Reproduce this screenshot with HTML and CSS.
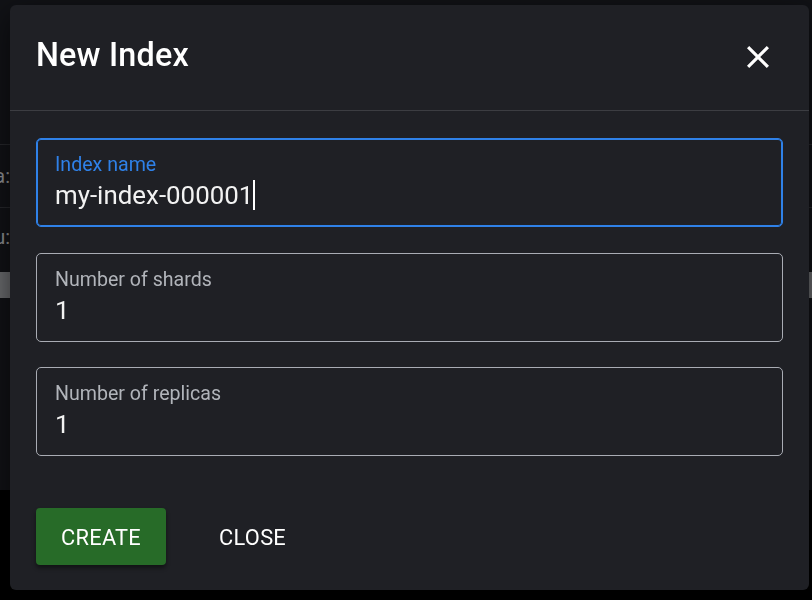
FILE: index.html
```html
<!DOCTYPE html>
<html lang="en">
<head>
<meta charset="utf-8">
<title>New Index</title>
<link rel="stylesheet" href="styles.css">
</head>
<body>
<div class="page">
  <div class="bg-row bg-row-first"><span class="bg-cell"></span></div>
  <div class="bg-row"><span class="bg-cell">Replica:</span></div>
  <div class="bg-row bg-row-plain"><span class="bg-cell">Menu:</span></div>
  <div class="bg-bar"></div>
</div>

<div class="dialog" role="dialog" aria-labelledby="dlg-title">
  <div class="dialog-header">
    <h2 class="dialog-title" id="dlg-title">New Index</h2>
    <button class="icon-btn" aria-label="close">
      <svg viewBox="5 5 14 14" width="22" height="22" aria-hidden="true">
        <path fill="#ffffff" d="M19 6.41L17.590 5 12 10.59 6.41 5 5 6.41 10.59 12 5 17.59 6.41 19 12 13.41 17.59 19 19 17.59 13.41 12z"/>
      </svg>
    </button>
  </div>
  <div class="dialog-content">
    <div class="field field-focused">
      <label class="field-label">Index name</label>
      <div class="field-value">my-index-000001<span class="caret"></span></div>
    </div>
    <div class="field">
      <label class="field-label">Number of shards</label>
      <div class="field-value">1</div>
    </div>
    <div class="field">
      <label class="field-label">Number of replicas</label>
      <div class="field-value">1</div>
    </div>
  </div>
  <div class="dialog-actions">
    <button class="btn btn-contained">CREATE</button>
    <button class="btn btn-text">CLOSE</button>
  </div>
</div>
</body>
</html>
```

FILE: styles.css
```css
html, body {
  margin: 0;
  padding: 0;
}
body {
  width: 812px;
  height: 600px;
  overflow: hidden;
  background: #000000;
  font-family: Roboto, "Noto Sans", "Liberation Sans", sans-serif;
}

/* page behind the modal (dimmed) */
.page {
  height: 490px;
  background: #111216;
  display: flex;
  flex-direction: column;
}
.bg-row {
  height: 62px;
  border-bottom: 1px solid #26272b;
  display: flex;
  align-items: center;
}
.bg-row-first {
  height: 144px;
}
.bg-row-plain {
  border-bottom: none;
  height: 58px;
}
.bg-cell {
  width: 10px;
  overflow: hidden;
  display: flex;
  justify-content: flex-end;
  white-space: nowrap;
  color: #8d8e92;
  font-size: 20px;
}
.bg-bar {
  width: 100%;
  height: 26px;
  margin-top: 6px;
  background: #6a6b6e;
}

/* dialog */
.dialog {
  position: fixed;
  left: 10px;
  top: 5px;
  width: 799px;
  height: 585px;
  background: #1f2025;
  border-radius: 6px;
  box-shadow: 0 10px 30px rgba(0, 0, 0, 0.6);
  display: flex;
  flex-direction: column;
  box-sizing: border-box;
}
.dialog-header {
  height: 106px;
  box-sizing: border-box;
  border-bottom: 1px solid #3c3d42;
  display: flex;
  align-items: flex-start;
  justify-content: space-between;
  padding: 30px 33px 0 26px;
}
.dialog-title {
  margin: 0;
  font-size: 32.3px;
  line-height: 40px;
  font-weight: 500;
  color: #ffffff;
  letter-spacing: 0.2px;
}
.icon-btn {
  width: 37px;
  height: 37px;
  margin-top: 3px;
  padding: 0;
  border: none;
  background: transparent;
  display: flex;
  align-items: center;
  justify-content: center;
  cursor: pointer;
}

.dialog-content {
  padding: 27px 26px 0 26px;
  display: flex;
  flex-direction: column;
  gap: 25.5px;
}
.field {
  height: 89px;
  box-sizing: border-box;
  border: 1px solid #a9acb4;
  border-radius: 5px;
  padding: 14.3px 18px 0 18px;
}
.field-focused {
  border-color: #2f81e8;
  box-shadow: inset 0 0 0 1px #2f81e8;
}
.field-label {
  display: block;
  font-size: 19.6px;
  line-height: 24px;
  color: #b1b4ba;
}
.field-focused .field-label {
  color: #2f81e8;
}
.field-value {
  margin-top: 2px;
  font-size: 25.9px;
  line-height: 32px;
  color: #f2f2f2;
  display: flex;
  align-items: center;
}
.caret {
  display: inline-block;
  width: 2px;
  height: 30px;
  margin-left: 0;
  background: #ffffff;
}

.dialog-actions {
  margin-top: 52px;
  padding: 0 26px;
  display: flex;
  align-items: center;
  gap: 13px;
}
.btn {
  font-family: Roboto, "Noto Sans", "Liberation Sans", sans-serif;
  font-size: 21.8px;
  font-weight: 400;
  letter-spacing: 0.3px;
  color: #ffffff;
  border: none;
  border-radius: 4px;
  height: 57px;
  padding-top: 2px;
  cursor: pointer;
}
.btn-contained {
  width: 130px;
  background: #276b28;
  box-shadow: 0 3px 4px rgba(0, 0, 0, 0.45);
}
.btn-text {
  background: transparent;
  padding: 2px 40px 0 40px;
}
```
